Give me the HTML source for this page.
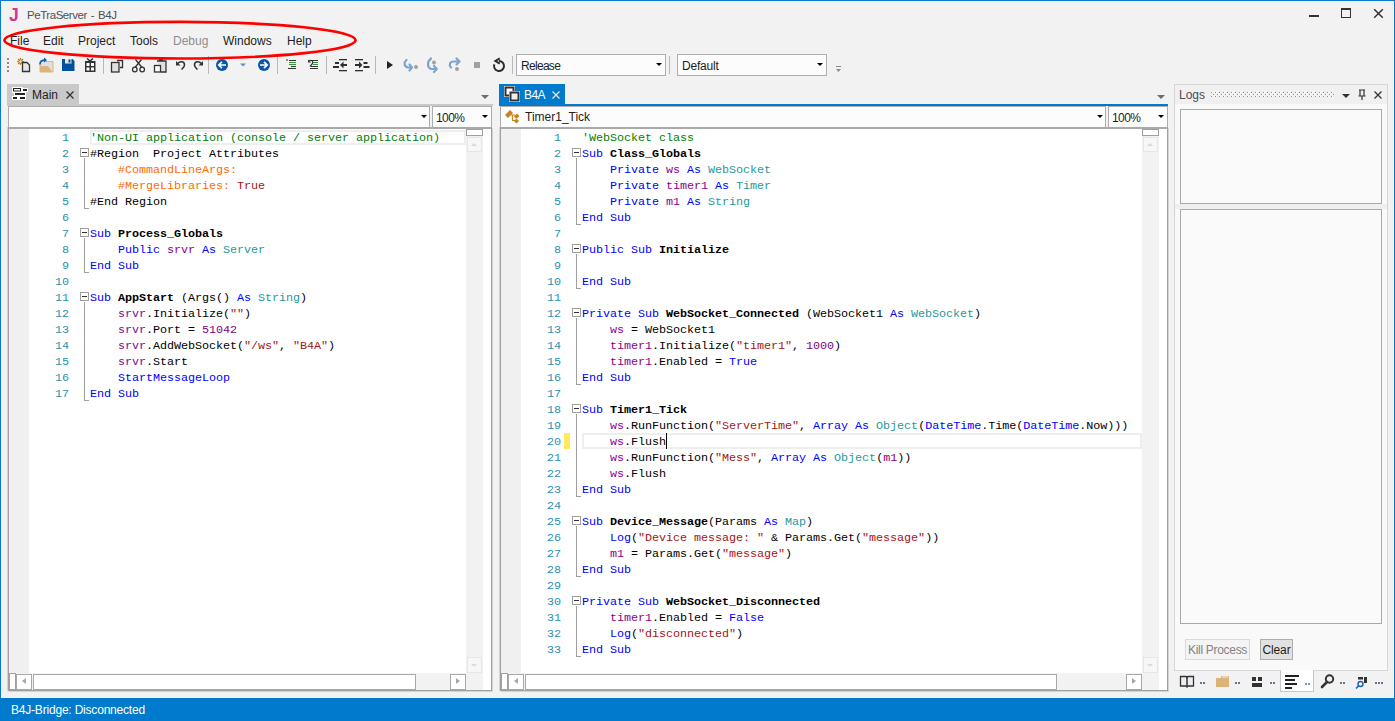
<!DOCTYPE html>
<html><head><meta charset="utf-8"><style>
*{box-sizing:border-box}
html,body{margin:0;padding:0}
body{width:1395px;height:721px;overflow:hidden;position:relative;background:#f2f2f2;font-family:"Liberation Sans",sans-serif;font-size:12px;color:#1e1e1e}
.a{position:absolute}
.ln{position:absolute;width:40px;padding-top:1px;text-align:right;font:11.75px/16px "Liberation Mono",monospace;letter-spacing:-0.05px;color:#2b91af;white-space:pre}
.cl{position:absolute;padding-top:1px;font:11.75px/16px "Liberation Mono",monospace;letter-spacing:-0.05px;color:#000;white-space:pre}
.cl .k{color:#0000ff}
.cl .f{color:#0000ff}
.cl .b{font-weight:bold;color:#000}
.cl .c{color:#008000}
.cl .v{color:#8b008b}
.cl .t{color:#1e9a9a}
.cl .s{color:#a31515}
.cl .n{color:#800080}
.cl .r{color:#ff6a00}
.fb{position:absolute;width:9px;height:9px;border:1px solid #a0a0a0;background:#fff}
.fb:after{content:"";position:absolute;left:1px;top:3px;width:5px;height:1px;background:#333}
.fv{position:absolute;width:1px;background:#a0a0a0}
.fe{position:absolute;width:5px;height:1px;background:#a0a0a0}
.cb{height:22px;background:#fcfcfc;border:1px solid #adadad;font-size:12px;color:#1e1e1e}
.cb span{position:absolute;left:4px;top:4px}
.cb:after{content:'';position:absolute;right:3px;top:8px;border-left:3px solid transparent;border-right:3px solid transparent;border-top:3px solid #000}
.menu{position:absolute;top:34px;font-size:12px;color:#1e1e1e;white-space:nowrap}
</style></head>
<body>
<div class="a" style="left:0;top:0;width:1395px;height:1px;background:#0b78d0"></div>
<div class="a" style="left:0;top:0;width:1px;height:698px;background:#0b78d0"></div>
<div class="a" style="left:1394px;top:0;width:1px;height:698px;background:#0b78d0"></div>
<div class="a" style="left:9px;top:5px;font:bold 17.5px 'Liberation Sans';color:#d6339a">J</div>
<div class="a" style="left:27px;top:9px;font-size:11.5px;color:#505050;letter-spacing:-0.45px;word-spacing:1.2px">PeTraServer - B4J</div>
<div class="a" style="left:1309px;top:15px;width:10px;height:2px;background:#333"></div>
<div class="a" style="left:1341px;top:8px;width:10px;height:10px;border:1px solid #333;border-top-width:2px"></div>
<svg class="a" style="left:1373px;top:8px" width="11" height="11"><path d="M1.2 1.2L9.8 9.8M9.8 1.2L1.2 9.8" stroke="#333" stroke-width="1.5"/></svg>
<div class="menu" style="left:10px;color:#1e1e1e">File</div>
<div class="menu" style="left:43px;color:#1e1e1e">Edit</div>
<div class="menu" style="left:78px;color:#1e1e1e">Project</div>
<div class="menu" style="left:130px;color:#1e1e1e">Tools</div>
<div class="menu" style="left:173px;color:#8d8d8d">Debug</div>
<div class="menu" style="left:223px;color:#1e1e1e">Windows</div>
<div class="menu" style="left:287px;color:#1e1e1e">Help</div>
<div class="a" style="left:7px;top:84px;width:72px;height:22px;background:#c9c9c9"></div>
<div class="a" style="left:7px;top:104px;width:486px;height:2px;background:#c9c9c9"></div>
<div class="a" style="left:32px;top:88px;font-size:12px;color:#1e1e1e">Main</div>
<div class="a" style="left:8px;top:106px;width:422px;height:21px;background:#fcfcfc;border:1px solid #adadad;border-bottom:none"></div>
<div class="a" style="left:432px;top:106px;width:60px;height:21px;background:#fcfcfc;border:1px solid #adadad;border-bottom:none"></div>
<div class="a" style="left:436px;top:111px;font-size:12px;color:#1e1e1e;letter-spacing:-0.6px">100%</div>
<div class="a" style="left:8px;top:127px;width:484px;height:564px;background:#fff;border:1px solid #a0a0a0;border-top:2px solid #a9a9a9;box-shadow:1px 1px 0 #d4d4d4,-1px 0 0 #d4d4d4"></div>
<div class="a" style="left:9px;top:129px;width:20px;height:544px;background:#f0f0f0"></div>
<div class="ln" style="left:29px;top:129px">1</div>
<div class="ln" style="left:29px;top:145px">2</div>
<div class="ln" style="left:29px;top:161px">3</div>
<div class="ln" style="left:29px;top:177px">4</div>
<div class="ln" style="left:29px;top:193px">5</div>
<div class="ln" style="left:29px;top:209px">6</div>
<div class="ln" style="left:29px;top:225px">7</div>
<div class="ln" style="left:29px;top:241px">8</div>
<div class="ln" style="left:29px;top:257px">9</div>
<div class="ln" style="left:29px;top:273px">10</div>
<div class="ln" style="left:29px;top:289px">11</div>
<div class="ln" style="left:29px;top:305px">12</div>
<div class="ln" style="left:29px;top:321px">13</div>
<div class="ln" style="left:29px;top:337px">14</div>
<div class="ln" style="left:29px;top:353px">15</div>
<div class="ln" style="left:29px;top:369px">16</div>
<div class="ln" style="left:29px;top:385px">17</div>
<div class="cl" style="left:90px;top:129px"><span class="c">'Non-UI application (console / server application)</span></div>
<div class="cl" style="left:90px;top:145px">#Region  Project Attributes</div>
<div class="cl" style="left:90px;top:161px">    <span class="r">#CommandLineArgs:</span></div>
<div class="cl" style="left:90px;top:177px">    <span class="r">#MergeLibraries:</span><span class="s"> True</span></div>
<div class="cl" style="left:90px;top:193px">#End Region</div>
<div class="cl" style="left:90px;top:225px"><span class="k">Sub </span><span class="b">Process_Globals</span></div>
<div class="cl" style="left:90px;top:241px">    <span class="k">Public </span><span class="v">srvr </span><span class="k">As </span><span class="t">Server</span></div>
<div class="cl" style="left:90px;top:257px"><span class="k">End Sub</span></div>
<div class="cl" style="left:90px;top:289px"><span class="k">Sub </span><span class="b">AppStart</span> (Args() <span class="k">As </span><span class="t">String</span>)</div>
<div class="cl" style="left:90px;top:305px">    <span class="v">srvr</span>.Initialize(<span class="s">""</span>)</div>
<div class="cl" style="left:90px;top:321px">    <span class="v">srvr</span>.Port = <span class="n">51042</span></div>
<div class="cl" style="left:90px;top:337px">    <span class="v">srvr</span>.AddWebSocket(<span class="s">"/ws"</span>, <span class="s">"B4A"</span>)</div>
<div class="cl" style="left:90px;top:353px">    <span class="v">srvr</span>.Start</div>
<div class="cl" style="left:90px;top:369px">    <span class="f">StartMessageLoop</span></div>
<div class="cl" style="left:90px;top:385px"><span class="k">End Sub</span></div>
<div class="fb" style="left:80px;top:148px"></div>
<div class="fv" style="left:84px;top:158px;height:51px"></div>
<div class="fe" style="left:84px;top:208px"></div>
<div class="fb" style="left:80px;top:228px"></div>
<div class="fv" style="left:84px;top:238px;height:35px"></div>
<div class="fe" style="left:84px;top:272px"></div>
<div class="fb" style="left:80px;top:292px"></div>
<div class="fv" style="left:84px;top:302px;height:99px"></div>
<div class="fe" style="left:84px;top:400px"></div>
<div class="a" style="left:499px;top:84px;width:66px;height:22px;background:#007acc"></div>
<div class="a" style="left:499px;top:104px;width:669px;height:2px;background:#007acc"></div>
<div class="a" style="left:524px;top:88px;font-size:12px;color:#fff;letter-spacing:-0.6px">B4A</div>
<div class="a" style="left:500px;top:106px;width:606px;height:21px;background:#fcfcfc;border:1px solid #adadad;border-bottom:none"></div>
<div class="a" style="left:525px;top:110px;font-size:12px;color:#1e1e1e">Timer1_Tick</div>
<div class="a" style="left:1108px;top:106px;width:60px;height:21px;background:#fcfcfc;border:1px solid #adadad;border-bottom:none"></div>
<div class="a" style="left:1112px;top:111px;font-size:12px;color:#1e1e1e;letter-spacing:-0.6px">100%</div>
<div class="a" style="left:500px;top:127px;width:668px;height:564px;background:#fff;border:1px solid #a0a0a0;border-top:2px solid #a9a9a9;box-shadow:1px 1px 0 #d4d4d4,-1px 0 0 #d4d4d4"></div>
<div class="a" style="left:501px;top:129px;width:20px;height:544px;background:#f0f0f0"></div>
<div class="ln" style="left:521px;top:129px">1</div>
<div class="ln" style="left:521px;top:145px">2</div>
<div class="ln" style="left:521px;top:161px">3</div>
<div class="ln" style="left:521px;top:177px">4</div>
<div class="ln" style="left:521px;top:193px">5</div>
<div class="ln" style="left:521px;top:209px">6</div>
<div class="ln" style="left:521px;top:225px">7</div>
<div class="ln" style="left:521px;top:241px">8</div>
<div class="ln" style="left:521px;top:257px">9</div>
<div class="ln" style="left:521px;top:273px">10</div>
<div class="ln" style="left:521px;top:289px">11</div>
<div class="ln" style="left:521px;top:305px">12</div>
<div class="ln" style="left:521px;top:321px">13</div>
<div class="ln" style="left:521px;top:337px">14</div>
<div class="ln" style="left:521px;top:353px">15</div>
<div class="ln" style="left:521px;top:369px">16</div>
<div class="ln" style="left:521px;top:385px">17</div>
<div class="ln" style="left:521px;top:401px">18</div>
<div class="ln" style="left:521px;top:417px">19</div>
<div class="ln" style="left:521px;top:433px">20</div>
<div class="ln" style="left:521px;top:449px">21</div>
<div class="ln" style="left:521px;top:465px">22</div>
<div class="ln" style="left:521px;top:481px">23</div>
<div class="ln" style="left:521px;top:497px">24</div>
<div class="ln" style="left:521px;top:513px">25</div>
<div class="ln" style="left:521px;top:529px">26</div>
<div class="ln" style="left:521px;top:545px">27</div>
<div class="ln" style="left:521px;top:561px">28</div>
<div class="ln" style="left:521px;top:577px">29</div>
<div class="ln" style="left:521px;top:593px">30</div>
<div class="ln" style="left:521px;top:609px">31</div>
<div class="ln" style="left:521px;top:625px">32</div>
<div class="ln" style="left:521px;top:641px">33</div>
<div class="cl" style="left:582px;top:129px"><span class="c">'WebSocket class</span></div>
<div class="cl" style="left:582px;top:145px"><span class="k">Sub </span><span class="b">Class_Globals</span></div>
<div class="cl" style="left:582px;top:161px">    <span class="k">Private </span><span class="v">ws </span><span class="k">As </span><span class="t">WebSocket</span></div>
<div class="cl" style="left:582px;top:177px">    <span class="k">Private </span><span class="v">timer1 </span><span class="k">As </span><span class="t">Timer</span></div>
<div class="cl" style="left:582px;top:193px">    <span class="k">Private </span><span class="v">m1 </span><span class="k">As </span><span class="t">String</span></div>
<div class="cl" style="left:582px;top:209px"><span class="k">End Sub</span></div>
<div class="cl" style="left:582px;top:241px"><span class="k">Public Sub </span><span class="b">Initialize</span></div>
<div class="cl" style="left:582px;top:273px"><span class="k">End Sub</span></div>
<div class="cl" style="left:582px;top:305px"><span class="k">Private Sub </span><span class="b">WebSocket_Connected</span> (WebSocket1 <span class="k">As </span><span class="t">WebSocket</span>)</div>
<div class="cl" style="left:582px;top:321px">    <span class="v">ws</span> = WebSocket1</div>
<div class="cl" style="left:582px;top:337px">    <span class="v">timer1</span>.Initialize(<span class="s">"timer1"</span>, <span class="n">1000</span>)</div>
<div class="cl" style="left:582px;top:353px">    <span class="v">timer1</span>.Enabled = <span class="k">True</span></div>
<div class="cl" style="left:582px;top:369px"><span class="k">End Sub</span></div>
<div class="cl" style="left:582px;top:401px"><span class="k">Sub </span><span class="b">Timer1_Tick</span></div>
<div class="cl" style="left:582px;top:417px">    <span class="v">ws</span>.RunFunction(<span class="s">"ServerTime"</span>, <span class="f">Array </span><span class="k">As </span><span class="t">Object</span>(<span class="f">DateTime</span>.Time(<span class="f">DateTime</span>.Now)))</div>
<div class="cl" style="left:582px;top:433px">    <span class="v">ws</span>.Flush</div>
<div class="cl" style="left:582px;top:449px">    <span class="v">ws</span>.RunFunction(<span class="s">"Mess"</span>, <span class="f">Array </span><span class="k">As </span><span class="t">Object</span>(<span class="v">m1</span>))</div>
<div class="cl" style="left:582px;top:465px">    <span class="v">ws</span>.Flush</div>
<div class="cl" style="left:582px;top:481px"><span class="k">End Sub</span></div>
<div class="cl" style="left:582px;top:513px"><span class="k">Sub </span><span class="b">Device_Message</span>(Params <span class="k">As </span><span class="t">Map</span>)</div>
<div class="cl" style="left:582px;top:529px">    <span class="f">Log</span>(<span class="s">"Device message: "</span> &amp; Params.Get(<span class="s">"message"</span>))</div>
<div class="cl" style="left:582px;top:545px">    <span class="v">m1</span> = Params.Get(<span class="s">"message"</span>)</div>
<div class="cl" style="left:582px;top:561px"><span class="k">End Sub</span></div>
<div class="cl" style="left:582px;top:593px"><span class="k">Private Sub </span><span class="b">WebSocket_Disconnected</span></div>
<div class="cl" style="left:582px;top:609px">    <span class="v">timer1</span>.Enabled = <span class="k">False</span></div>
<div class="cl" style="left:582px;top:625px">    <span class="f">Log</span>(<span class="s">"disconnected"</span>)</div>
<div class="cl" style="left:582px;top:641px"><span class="k">End Sub</span></div>
<div class="fb" style="left:572px;top:148px"></div>
<div class="fv" style="left:576px;top:158px;height:67px"></div>
<div class="fe" style="left:576px;top:224px"></div>
<div class="fb" style="left:572px;top:244px"></div>
<div class="fv" style="left:576px;top:254px;height:35px"></div>
<div class="fe" style="left:576px;top:288px"></div>
<div class="fb" style="left:572px;top:308px"></div>
<div class="fv" style="left:576px;top:318px;height:67px"></div>
<div class="fe" style="left:576px;top:384px"></div>
<div class="fb" style="left:572px;top:404px"></div>
<div class="fv" style="left:576px;top:414px;height:83px"></div>
<div class="fe" style="left:576px;top:496px"></div>
<div class="fb" style="left:572px;top:516px"></div>
<div class="fv" style="left:576px;top:526px;height:51px"></div>
<div class="fe" style="left:576px;top:576px"></div>
<div class="fb" style="left:572px;top:596px"></div>
<div class="fv" style="left:576px;top:606px;height:51px"></div>
<div class="fe" style="left:576px;top:656px"></div>
<div class="a" style="left:466px;top:129px;width:17px;height:561px;background:#f2f2f2"></div>
<div class="a" style="left:466px;top:129px;width:17px;height:7px;background:#fff;border:1px solid #a0a0a0"></div>
<div class="a" style="left:467px;top:137px;width:15px;height:15px;background:#f7f7f7;border:1px solid #e6e6e6"></div>
<div class="a" style="left:471px;top:143px;width:0;height:0;border-left:3px solid transparent;border-right:3px solid transparent;border-bottom:3px solid #dadada"></div>
<div class="a" style="left:467px;top:657px;width:15px;height:16px;background:#f7f7f7;border:1px solid #e6e6e6"></div>
<div class="a" style="left:471px;top:664px;width:0;height:0;border-left:3px solid transparent;border-right:3px solid transparent;border-top:3px solid #dadada"></div>
<div class="a" style="left:9px;top:673px;width:457px;height:17px;background:#f2f2f2"></div>
<div class="a" style="left:9px;top:673px;width:7px;height:17px;background:#fff;border:1px solid #a0a0a0"></div>
<div class="a" style="left:16px;top:674px;width:16px;height:16px;background:#fff;border:1px solid #a8a8a8"></div>
<div class="a" style="left:22px;top:678px;width:0;height:0;border-top:3.5px solid transparent;border-bottom:3.5px solid transparent;border-right:4px solid #a8a8a8"></div>
<div class="a" style="left:33px;top:674px;width:383px;height:16px;background:#fff;border:1px solid #a8a8a8"></div>
<div class="a" style="left:450px;top:674px;width:16px;height:16px;background:#fff;border:1px solid #a8a8a8"></div>
<div class="a" style="left:456px;top:678px;width:0;height:0;border-top:3.5px solid transparent;border-bottom:3.5px solid transparent;border-left:4px solid #a8a8a8"></div>
<div class="a" style="left:1142px;top:129px;width:17px;height:561px;background:#f2f2f2"></div>
<div class="a" style="left:1142px;top:129px;width:17px;height:7px;background:#fff;border:1px solid #a0a0a0"></div>
<div class="a" style="left:1143px;top:137px;width:15px;height:15px;background:#f7f7f7;border:1px solid #e6e6e6"></div>
<div class="a" style="left:1147px;top:143px;width:0;height:0;border-left:3px solid transparent;border-right:3px solid transparent;border-bottom:3px solid #dadada"></div>
<div class="a" style="left:1143px;top:657px;width:15px;height:16px;background:#f7f7f7;border:1px solid #e6e6e6"></div>
<div class="a" style="left:1147px;top:664px;width:0;height:0;border-left:3px solid transparent;border-right:3px solid transparent;border-top:3px solid #dadada"></div>
<div class="a" style="left:501px;top:673px;width:641px;height:17px;background:#f2f2f2"></div>
<div class="a" style="left:501px;top:673px;width:7px;height:17px;background:#fff;border:1px solid #a0a0a0"></div>
<div class="a" style="left:508px;top:674px;width:16px;height:16px;background:#fff;border:1px solid #a8a8a8"></div>
<div class="a" style="left:514px;top:678px;width:0;height:0;border-top:3.5px solid transparent;border-bottom:3.5px solid transparent;border-right:4px solid #a8a8a8"></div>
<div class="a" style="left:525px;top:674px;width:532px;height:16px;background:#fff;border:1px solid #a8a8a8"></div>
<div class="a" style="left:1126px;top:674px;width:16px;height:16px;background:#fff;border:1px solid #a8a8a8"></div>
<div class="a" style="left:1132px;top:678px;width:0;height:0;border-top:3.5px solid transparent;border-bottom:3.5px solid transparent;border-left:4px solid #a8a8a8"></div>
<div class="a" style="left:90px;top:130px;width:376px;height:15px;border:2px solid #eeeeee"></div>
<div class="a" style="left:582px;top:433px;width:560px;height:16px;border:2px solid #eeeeee"></div>
<div class="a" style="left:564px;top:433px;width:6px;height:16px;background:#ffe95c"></div>
<div class="a" style="left:666px;top:433px;width:1px;height:16px;background:#000"></div>
<div class="a" style="left:1174px;top:84px;width:214px;height:587px;background:#f9f9f9;border:1px solid #d6d6d6"></div>
<div class="a" style="left:1175px;top:85px;width:212px;height:19px;background:#f0f0f0"></div>
<div class="a" style="left:1179px;top:88px;font-size:12px;color:#4a4a5a">Logs</div>
<svg class="a" style="left:1211px;top:92px" width="124" height="5"><defs><pattern id="dp" width="4" height="4" patternUnits="userSpaceOnUse"><rect x="0" y="0" width="1" height="1" fill="#8f8f8f"/><rect x="2" y="2" width="1" height="1" fill="#8f8f8f"/><rect x="1" y="0" width="1" height="1" fill="#fcfcfc"/><rect x="3" y="2" width="1" height="1" fill="#fcfcfc"/></pattern></defs><rect width="124" height="5" fill="url(#dp)"/></svg>
<div class="a" style="left:1180px;top:109px;width:202px;height:95px;background:#fafafa;border:1px solid #a9a9a9"></div>
<div class="a" style="left:1175px;top:204px;width:212px;height:5px;background:#efefef"></div>
<div class="a" style="left:1180px;top:209px;width:202px;height:415px;background:#fafafa;border:1px solid #a9a9a9"></div>
<div class="a" style="left:1185px;top:639px;width:65px;height:21px;background:#f4f4f4;border:1px solid #d9d9d9;color:#838383;font-size:12px;text-align:center;line-height:21px;letter-spacing:-0.3px">Kill Process</div>
<div class="a" style="left:1260px;top:639px;width:33px;height:21px;background:#e1e1e1;border:1px solid #adadad;color:#1e1e1e;font-size:12px;text-align:center;line-height:21px;letter-spacing:-0.1px">Clear</div>
<div class="a" style="left:1280px;top:670px;width:34px;height:22px;background:#fff;border:1px solid #c8c8c8;border-top:none"></div>

<svg class="a" style="left:1170px;top:668px" width="225" height="28" viewBox="1170 668 225 28">
 <path d="M1180.5 676.5h5.5l1 1 1-1h5.5v9.5h-5.5l-1 1-1-1h-5.5z" fill="#eceef2" stroke="#333" stroke-width="1.3"/>
 <path d="M1187 677v9.5" stroke="#333" stroke-width="1.5"/>
 <path d="M1216 678h13v9h-13z" fill="#dcb47a"/><path d="M1221 676h8v2h-8z" fill="#dcb47a"/><path d="M1222 677h6" stroke="#fff" stroke-width="0.8"/>
 <g fill="#333"><rect x="1252" y="677" width="4" height="4"/><rect x="1258" y="677" width="4" height="4"/><rect x="1252" y="683" width="10" height="4"/></g>
 <g fill="#222"><rect x="1285" y="675" width="14" height="2"/><rect x="1285" y="679" width="10" height="2"/><rect x="1285" y="683" width="12" height="2"/><rect x="1285" y="687" width="7" height="2"/></g>
 <circle cx="1329.5" cy="679" r="3.7" fill="none" stroke="#333" stroke-width="2"/>
 <path d="M1327 682l-5 5" stroke="#333" stroke-width="2.6" stroke-linecap="round"/>
 <g fill="#333"><rect x="1358" y="677" width="5" height="2.5"/><rect x="1364" y="677" width="3" height="6"/></g>
 <circle cx="1360.5" cy="684" r="2.5" fill="none" stroke="#1d5fb0" stroke-width="1.4"/>
 <path d="M1358.5 686l-2.5 2.5" stroke="#1d5fb0" stroke-width="1.6"/>
 <g fill="#3a3a6a"><rect x="1200.3" y="682" width="1.4" height="2"/><rect x="1203.3" y="682" width="1.4" height="2"/>
 <rect x="1235.3" y="682" width="1.4" height="2"/><rect x="1238.3" y="682" width="1.4" height="2"/>
 <rect x="1270.3" y="682" width="1.4" height="2"/><rect x="1273.3" y="682" width="1.4" height="2"/>
 <rect x="1340.3" y="682" width="1.4" height="2"/><rect x="1343.3" y="682" width="1.4" height="2"/>
 <rect x="1375.3" y="682" width="1.4" height="2"/><rect x="1378.3" y="682" width="1.4" height="2"/><rect x="1381.3" y="682" width="1.4" height="2"/></g>
 <g fill="#3070d0"><rect x="1305.3" y="683" width="1.4" height="2"/><rect x="1308.3" y="683" width="1.4" height="2"/></g>
</svg>

<div class="a" style="left:0;top:698px;width:1395px;height:23px;background:#007acc"></div>
<div class="a" style="left:11px;top:703px;font-size:12px;color:#fff;letter-spacing:-0.2px">B4J-Bridge: Disconnected</div>

<svg class="a" style="left:0;top:80px" width="1395" height="620" viewBox="0 80 1395 620">
 <!-- main tab icon -->
 <g fill="#fff"><rect x="12" y="87" width="11" height="6"/><rect x="22" y="88" width="6" height="4"/><rect x="14" y="92" width="12" height="4"/><rect x="12" y="96" width="7" height="4"/><rect x="19" y="96" width="7" height="4"/></g>
 <rect x="13.5" y="88.5" width="7" height="2.5" fill="#fff" stroke="#222" stroke-width="1"/>
 <g fill="#222"><rect x="23" y="89" width="4" height="2"/><rect x="15" y="93" width="10" height="2"/><rect x="13" y="97" width="4" height="2"/><rect x="20" y="97" width="5" height="2"/></g>
 <path d="M66.5 91.5l7 7M73.5 91.5l-7 7" stroke="#333" stroke-width="1.3"/>
 <!-- B4A tab icon -->
 <rect x="504" y="86" width="11" height="11" fill="#fff"/>
 <rect x="505.5" y="87.5" width="8" height="8" fill="none" stroke="#333" stroke-width="2"/>
 <rect x="509" y="91" width="11" height="11" fill="#fff"/>
 <rect x="510.5" y="92.5" width="8" height="8" fill="#eee" stroke="#333" stroke-width="2"/>
 <path d="M552.5 91.5l7 7M559.5 91.5l-7 7" stroke="#e8e8e8" stroke-width="1.3"/>
 <!-- overflow triangles -->
 <path d="M481 95h8l-4 4z" fill="#6d6d6d"/>
 <path d="M1157 95h8l-4 4z" fill="#6d6d6d"/>
 <!-- combo arrows -->
 <path d="M421 115h6l-3 3z" fill="#000"/>
 <path d="M482 115h6l-3 3z" fill="#000"/>
 <path d="M1097 115h6l-3 3z" fill="#000"/>
 <path d="M1158 115h6l-3 3z" fill="#000"/>
 <!-- timer icon -->
 <path d="M505 115L510 110L513 113L508 118Z" fill="#c8821e"/>
 <path d="M514 116.5L517 113.5L519.5 116L516.5 119ZM514 121L516.5 118.5L519 121L516.5 123.5Z" fill="#c8821e"/>
 <path d="M511 115H515M512.5 115V120.5H515" fill="none" stroke="#c8821e" stroke-width="1.2"/>
 <!-- logs header -->
 <path d="M1342 94h8l-4 4z" fill="#333"/>
 <path d="M1359 90h6M1360 90v6M1364 90v6M1358.5 96h7M1362 96v4" fill="none" stroke="#333" stroke-width="1.2"/>
 <path d="M1374.5 91.5l7 7M1381.5 91.5l-7 7" stroke="#333" stroke-width="1.3"/>
</svg>


<svg class="a" style="left:0;top:50px" width="860" height="30" viewBox="0 50 860 30">
 <g fill="#8a8a8a"><rect x="7" y="58" width="2" height="2"/><rect x="7" y="62" width="2" height="2"/><rect x="7" y="66" width="2" height="2"/><rect x="7" y="70" width="2" height="2"/></g>
 <!-- new -->
 <g stroke="#c97b17" stroke-width="1.2"><path d="M20.5 58v7M17 61.5h7M18 59l5 5M23 59l-5 5"/></g>
 <circle cx="20.5" cy="61.5" r="1.6" fill="#f2f2f2" stroke="#c97b17" stroke-width="1"/>
 <path d="M22.5 62.5h4.5l2.5 2.5v6.5h-7z" fill="#e6e6e6" stroke="#333" stroke-width="1.3"/>
 <!-- open -->
 <path d="M40 61.5h13v10.5h-13z" fill="#e0e0e0" stroke="#dcb57a" stroke-width="1"/>
 <path d="M40 66h8l4.5 6h-12.5z" fill="#dcb57a"/>
 <path d="M40 64.5c0-3 2-4.5 5-4.5" fill="none" stroke="#0a5bb0" stroke-width="1.6"/>
 <path d="M44 57.5l3 2.5-3 2.5z" fill="#0a5bb0"/>
 <!-- save -->
 <path d="M62 59h10.5l2 2v10h-12.5z" fill="#00529c"/>
 <rect x="65" y="59" width="6.5" height="4.5" fill="#e6e6e6"/>
 <rect x="68.5" y="59.5" width="2" height="3" fill="#00529c"/>
 <!-- save all -->
 <rect x="85" y="61" width="10.5" height="11" fill="#333"/>
 <g fill="#fff"><rect x="86.5" y="63" width="3" height="3"/><rect x="91" y="63" width="3" height="3"/><rect x="86.5" y="67.5" width="3" height="3"/><rect x="91" y="67.5" width="3" height="3"/></g>
 <path d="M87 58.5l3 2.5 3-2.5" fill="none" stroke="#333" stroke-width="1.6"/>
 <g fill="#b8b8b8"><rect x="103" y="56" width="1" height="18"/><rect x="208" y="56" width="1" height="18"/><rect x="277" y="56" width="1" height="18"/><rect x="326" y="56" width="1" height="18"/><rect x="375" y="56" width="1" height="18"/><rect x="512" y="56" width="1" height="18"/><rect x="669" y="56" width="1" height="18"/></g>
 <!-- copy -->
 <path d="M117 60.5h5.5v7h-2.5" fill="none" stroke="#333" stroke-width="1.3"/>
 <rect x="111.5" y="62.5" width="7.5" height="9.5" fill="#e0e0e0" stroke="#333" stroke-width="1.3"/>
 <!-- cut -->
 <path d="M135.5 59.5l6.5 8M141.5 59.5l-6.5 8" stroke="#333" stroke-width="1.3"/>
 <circle cx="134.8" cy="69.5" r="2.3" fill="none" stroke="#333" stroke-width="1.3"/>
 <circle cx="142.2" cy="69.5" r="2.3" fill="none" stroke="#333" stroke-width="1.3"/>
 <!-- paste -->
 <path d="M157 61h9v11h-5" fill="#e0e0e0" stroke="#333" stroke-width="1.3"/>
 <rect x="159" y="58.5" width="4" height="2.5" fill="#333"/>
 <rect x="154.5" y="65.5" width="6" height="6.5" fill="#fff" stroke="#333" stroke-width="1.3"/>
 <!-- undo/redo -->
 <path d="M177.5 63.5c3-3 7-2 7 1.5 0 2-1.5 3-3 4.5" fill="none" stroke="#333" stroke-width="1.6"/>
 <path d="M176 61v4.5h4.5z" fill="#333"/>
 <path d="M201.5 63.5c-3-3-7-2-7 1.5 0 2 1.5 3 3 4.5" fill="none" stroke="#333" stroke-width="1.6"/>
 <path d="M203 61v4.5h-4.5z" fill="#333"/>
 <!-- nav -->
 <circle cx="222" cy="65" r="6" fill="#0a55a8"/>
 <path d="M226 65h-7M222 61.8l-3.2 3.2 3.2 3.2" fill="none" stroke="#fff" stroke-width="1.7"/>
 <path d="M240 63.5h6l-3 3z" fill="#5b8fd0"/>
 <circle cx="264" cy="65" r="6" fill="#0a55a8"/>
 <path d="M260 65h7M264 61.8l3.2 3.2-3.2 3.2" fill="none" stroke="#fff" stroke-width="1.7"/>
 <!-- block comment -->
 <g stroke-width="1.2"><path d="M289 60.5h7M291 66.5h5M288 68.5h8" stroke="#333"/><path d="M289 62.5h7M289 64.5h7" stroke="#2e9a2e"/><path d="M286 60h2" stroke="#333"/></g>
 <g stroke-width="1.2"><path d="M311 60.5h7M311 66.5h7M310 68.5h8" stroke="#333"/><path d="M313 62.5h5M313 64.5h5" stroke="#2e9a2e"/></g>
 <path d="M309 61c2.5-1.5 4.5 0 3.5 2.5l-2.5 3" fill="none" stroke="#333" stroke-width="1.2"/>
 <path d="M308 59.5v3h3z" fill="#333"/>
 <!-- outdent/indent -->
 <g fill="#2e2e2e">
  <rect x="339" y="59" width="8" height="1.3"/><rect x="339" y="70" width="8" height="1.3"/>
  <rect x="335" y="62" width="4" height="2"/><rect x="333" y="66" width="6" height="2"/>
  <rect x="342" y="64" width="5" height="2"/><path d="M340 65l3.5-3.5v7z"/>
  <rect x="355" y="59" width="8" height="1.3"/><rect x="355" y="70" width="8" height="1.3"/>
  <rect x="363.5" y="62" width="4" height="2"/><rect x="363.5" y="66" width="6" height="2"/>
  <rect x="355" y="64" width="5" height="2"/><path d="M362.5 65l-3.5-3.5v7z"/>
 </g>
 <!-- run -->
 <path d="M387 61v8l6-4z" fill="#222"/>
 <g fill="none" stroke="#7ba5cf" stroke-width="2.2" stroke-linecap="round" stroke-linejoin="round">
  <path d="M406.5 60c-3 2.5-2.5 6.5 1.5 7.5h3.5"/><path d="M409.5 64.5l2.5 3-2.5 3"/>
  <path d="M431 58.5c-4 3-4 9 0 10.5h5"/><path d="M434 66l2.8 3-2.8 3"/>
  <path d="M459 61.5h-5.5c-3.5 0-5 3.5-2.5 6"/><path d="M456.5 58.5l3 3-3 3"/>
 </g>
 <g fill="#a0a0a0"><circle cx="416" cy="67" r="2"/><circle cx="434" cy="62.5" r="2"/><circle cx="457" cy="69" r="2"/><rect x="474" y="62" width="6" height="6"/></g>
 <path d="M499 61A5 5 0 1 1 494.3 64.3" fill="none" stroke="#2a2a2a" stroke-width="2"/>
 <path d="M499.8 58.3L495.4 61L499.8 63.6" fill="none" stroke="#2a2a2a" stroke-width="2"/>
 <rect x="836" y="66" width="5" height="1" fill="#8a8a8a"/><path d="M836 69h5l-2.5 3z" fill="#8a8a8a"/>
</svg>
<div class="a cb" style="left:516px;top:54px;width:150px"><span style="letter-spacing:-0.7px">Release</span></div>
<div class="a cb" style="left:677px;top:54px;width:150px"><span style="letter-spacing:-0.2px">Default</span></div>

<svg class="a" style="left:0;top:0" width="400" height="80"><ellipse cx="180" cy="40.2" rx="175.6" ry="18.3" fill="none" stroke="#ff0000" stroke-width="2.7"/></svg>
</body></html>
